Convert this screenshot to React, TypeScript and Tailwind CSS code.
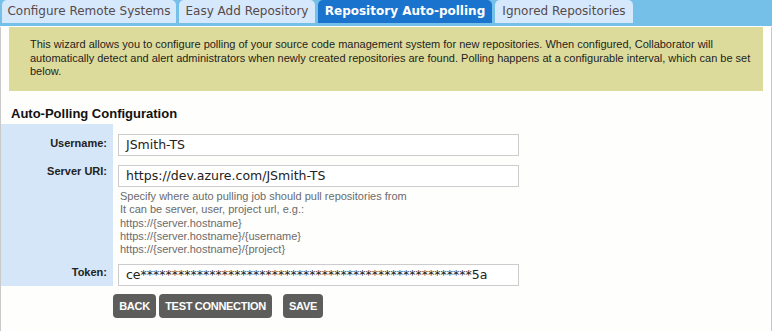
import React from "react";

const tabs = [
  { label: "Configure Remote Systems", width: "w-[174px]", active: false },
  { label: "Easy Add Repository", width: "w-[136px]", active: false },
  { label: "Repository Auto-polling", width: "w-[174px]", active: true },
  { label: "Ignored Repositories", width: "w-[138px]", active: false },
];

const examples = [
  "https://{server.hostname}",
  "https://{server.hostname}/{username}",
  "https://{server.hostname}/{project}",
];

function TabBar() {
  return (
    <div className="flex h-[26px] items-start gap-[3px] bg-[#74c0e9] pl-[2px]">
      {tabs.map((tab) => (
        <div
          key={tab.label}
          className={
            tab.active
              ? `${tab.width} h-[23px] rounded-t-[5px] bg-[#1a74cd] text-center font-['DejaVu_Sans',sans-serif] text-[12px] font-bold leading-[23px] text-white`
              : `${tab.width} h-[23px] rounded-t-[5px] bg-[#d6e8fb] text-center font-['DejaVu_Sans',sans-serif] text-[12px] leading-[23px] text-[#574a4a]`
          }
        >
          {tab.label}
        </div>
      ))}
    </div>
  );
}

function TextBox({ value }: { value: string }) {
  return (
    <div className="h-[22px] w-[401px] border border-[#cccccc] bg-white pl-[7px] font-['DejaVu_Sans',sans-serif] text-[12.5px] leading-[20px] text-[#222]">
      {value}
    </div>
  );
}

export default function App() {
  const token = "ce" + "*".repeat(53) + "5a";

  return (
    <div className="h-[331px] w-[772px] overflow-hidden bg-white font-['Liberation_Sans',Arial,sans-serif]">
      <TabBar />
      <div className="h-[305px] border-x border-[#c9c9c9] bg-[#fefefd]">
        <div className="mx-[8px] mt-[1px] h-[64px] bg-[#dddb9b] pl-[21px] pr-[12px] pt-[11px] text-[11px] leading-[13.5px] text-[#1e1e1e]">
          This wizard allows you to configure polling of your source code management system for new repositories. When
          configured, Collaborator will automatically detect and alert administrators when newly created repositories are
          found. Polling happens at a configurable interval, which can be set below.
        </div>

        <h2 className="ml-[10px] mt-[15px] text-[13px] font-bold leading-[16px] text-[#111]">
          Auto-Polling Configuration
        </h2>

        <div className="mt-[2px] grid grid-cols-[112px_1fr] text-[11px]">
          <div className="bg-[#d5e6f9] pr-[6px] pt-[13px] text-right font-bold leading-[13px] text-[#222]">Username:</div>
          <div className="pb-[9px] pl-[5px] pt-[10px]">
            <TextBox value="JSmith-TS" />
          </div>

          <div className="bg-[#d5e6f9] pr-[6px] text-right font-bold leading-[13px] text-[#222]">Server URI:</div>
          <div className="pb-[8px] pl-[5px]">
            <TextBox value="https://dev.azure.com/JSmith-TS" />
            <div className="mt-[3px] pl-[2px] leading-[13.3px] text-[#6b6b6b]">
              <div>Specify where auto pulling job should pull repositories from</div>
              <div>It can be server, user, project url, e.g.:</div>
              {examples.map((ex) => (
                <div key={ex}>{ex}</div>
              ))}
            </div>
          </div>

          <div className="bg-[#d5e6f9] pr-[6px] pt-[2px] text-right font-bold leading-[13px] text-[#222]">Token:</div>
          <div className="pl-[5px]">
            <TextBox value={token} />
          </div>
        </div>

        <div className="ml-[112px] mt-[8px] flex items-center text-[11px] font-bold tracking-[-0.3px] text-white">
          <button className="h-[24px] w-[43px] rounded-[4px] bg-[#5d5e5b]">BACK</button>
          <button className="ml-[3px] h-[24px] w-[113px] rounded-[4px] bg-[#5d5e5b]">TEST CONNECTION</button>
          <button className="ml-[11px] h-[24px] w-[40px] rounded-[4px] bg-[#5d5e5b]">SAVE</button>
        </div>
      </div>
    </div>
  );
}
